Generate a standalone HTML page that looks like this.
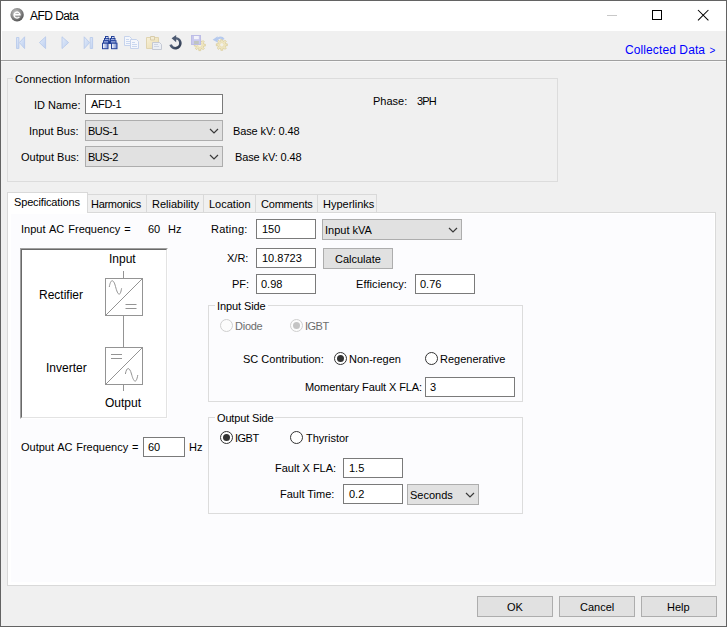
<!DOCTYPE html>
<html><head><meta charset="utf-8">
<style>
*{margin:0;padding:0;box-sizing:border-box}
html,body{width:727px;height:627px;overflow:hidden;background:#f0f0f0}
body{position:relative;font-family:"Liberation Sans",sans-serif;font-size:11px;color:#000}
.a{position:absolute}
.t{position:absolute;white-space:nowrap;font-size:11px;line-height:13px;letter-spacing:0}
.tb{position:absolute;background:#fff;border:1px solid #7a7a7a}
.cb{position:absolute;background:#e1e1e1;border:1px solid #adadad}
.btn{position:absolute;background:#e1e1e1;border:1px solid #adadad}
.gb{position:absolute;border:1px solid #dcdcdc}
.chev{position:absolute;width:12px;height:7px}
.rad{position:absolute;width:13px;height:13px;border-radius:50%;border:1px solid #333;background:#fff}
</style></head><body>
<!-- window frame -->
<div class="a" style="left:0;top:0;width:727px;height:627px;border:1px solid #636363;"></div>
<!-- title bar -->
<div class="a" style="left:1px;top:1px;width:725px;height:30px;background:#fff"></div>
<svg class="a" style="left:10px;top:8px" width="14" height="14" viewBox="0 0 14 14">
 <defs><radialGradient id="ig" cx="40%" cy="35%" r="65%"><stop offset="0" stop-color="#c8c8c8"/><stop offset="0.6" stop-color="#8a8a8a"/><stop offset="1" stop-color="#555"/></radialGradient></defs>
 <circle cx="7.1" cy="6.8" r="6.7" fill="url(#ig)"/>
 <path d="M4.2 6.7 H10 A3 3 0 1 0 9.4 8.9" fill="none" stroke="#fff" stroke-width="1.4"/>
</svg>
<div class="t" style="left:30px;top:9px;font-size:12px;line-height:14px;letter-spacing:-0.55px">AFD Data</div>
<div class="a" style="left:607px;top:15px;width:10px;height:1px;background:#c8c8c8"></div>
<div class="a" style="left:652px;top:10px;width:10px;height:10px;border:1px solid #000"></div>
<svg class="a" style="left:697px;top:9px" width="13" height="13" viewBox="0 0 13 13"><path d="M1 1 L11.4 11.4 M11.4 1 L1 11.4" stroke="#000" stroke-width="1.05"/></svg>
<!-- toolbar area -->
<div class="a" style="left:1px;top:31px;width:1px;height:29px;background:#fff"></div>
<div class="a" style="left:1px;top:60px;width:725px;height:1px;background:#a0a0a0"></div>
<div class="a" style="left:1px;top:61px;width:725px;height:1px;background:#f8f8f8"></div>
<!-- toolbar icons -->
<svg class="a" style="left:0;top:30px" width="240" height="26" viewBox="0 30 240 26">
 <defs>
  <linearGradient id="nav" x1="0" y1="0" x2="1" y2="1"><stop offset="0" stop-color="#e4ecf9"/><stop offset="1" stop-color="#bccff0"/></linearGradient>
  <linearGradient id="bino" x1="0" y1="0" x2="1" y2="0"><stop offset="0" stop-color="#ffffff"/><stop offset="1" stop-color="#6f86cc"/></linearGradient>
  <linearGradient id="clip" x1="0" y1="0" x2="1" y2="1"><stop offset="0" stop-color="#f8f1da"/><stop offset="1" stop-color="#eadbac"/></linearGradient>
  <linearGradient id="ref" x1="0" y1="0" x2="1" y2="1"><stop offset="0" stop-color="#6a7890"/><stop offset="1" stop-color="#2e3a50"/></linearGradient>
 </defs>
 <g fill="url(#nav)" stroke="#b9cbeb" stroke-width="0.9" stroke-linejoin="round">
  <rect x="16.5" y="37.5" width="2.4" height="11"/>
  <path d="M24.6 36.8 L19.4 42.6 L24.6 48.6 Z"/>
  <path d="M45.6 36.8 L39.4 42.6 L45.6 48.6 Z"/>
  <path d="M62 36.8 L68.6 42.6 L62 48.6 Z"/>
  <path d="M84.2 36.8 L89.6 42.6 L84.2 48.6 Z"/>
  <rect x="90.2" y="37.5" width="2.4" height="11"/>
 </g>
 <!-- binoculars -->
 <g stroke="#26439a" stroke-width="1" fill="#9fb0e2">
  <rect x="105.5" y="36.5" width="2.5" height="2"/>
  <rect x="111.5" y="36.5" width="2.5" height="2"/>
  <rect x="104.5" y="38.5" width="4.5" height="2.2"/>
  <rect x="110.5" y="38.5" width="4.5" height="2.2"/>
  <rect x="103.5" y="40.7" width="5.5" height="2.5"/>
  <rect x="110.5" y="40.7" width="5.5" height="2.5"/>
  <rect x="102.5" y="43.2" width="5.5" height="5.5" fill="url(#bino)"/>
  <rect x="111.5" y="43.2" width="5.5" height="5.5" fill="url(#bino)"/>
  <rect x="108.5" y="41.5" width="2" height="2" fill="#1d3a8e"/>
 </g>
 <g fill="#f4f6ff"><circle cx="106.8" cy="37.6" r="0.7"/><circle cx="112.8" cy="37.6" r="0.7"/></g>
 <!-- copy -->
 <g fill="#f5f7fc" stroke="#c6d3ec" stroke-width="1">
  <path d="M124.5 36.5 h5 l2 2 v7 h-7z"/>
  <path d="M130.5 39.5 h6 l2 2 v7 h-8z"/>
 </g>
 <g stroke="#c9d7f0" stroke-width="1"><path d="M126 39.5h3M126 41.5h4M126 43.5h4M132 42.5h3M132 44.5h5M132 46.5h5"/></g>
 <!-- paste -->
 <path d="M146.5 37.5 h12 v11 h-12z" fill="url(#clip)" stroke="#e0d4b0"/>
 <path d="M150.5 36.5 h4 v3.5 h-4z" fill="#f3ecd5" stroke="#d8ccaa"/>
 <path d="M152.5 42.5 h7 l2 2 v5 h-9z" fill="#eceff5" stroke="#c5c9d3"/>
 <g stroke="#cfd5e2"><path d="M154 44.5h4M154 46.5h5"/></g>
 <!-- refresh -->
 <path d="M176 38.2 A5 5 0 1 1 170.6 44.6" fill="none" stroke="url(#ref)" stroke-width="2.6"/>
 <path d="M171.6 38.3 L176.2 35 L176.2 42.2 Z" fill="#4d5a72"/>
 <!-- save gear -->
 <path d="M203.69 44.15 L205.31 44.12 L205.31 46.08 L203.69 46.05 L203.22 47.18 L204.39 48.30 L203.00 49.69 L201.88 48.52 L200.75 48.99 L200.78 50.61 L198.82 50.61 L198.85 48.99 L197.72 48.52 L196.60 49.69 L195.21 48.30 L196.38 47.18 L195.91 46.05 L194.29 46.08 L194.29 44.12 L195.91 44.15 L196.38 43.02 L195.21 41.90 L196.60 40.51 L197.72 41.68 L198.85 41.21 L198.82 39.59 L200.78 39.59 L200.75 41.21 L201.88 41.68 L203.00 40.51 L204.39 41.90 L203.22 43.02Z" fill="#efe6c2" stroke="#d8ca94" stroke-width="0.7"/>
 <circle cx="199.8" cy="45.1" r="2.2" fill="#f6f1de" stroke="#e2d6a8" stroke-width="0.6"/>
 <rect x="191.5" y="35.5" width="9" height="9" fill="#c9c9ee" stroke="#bdbde6"/>
 <rect x="194" y="36" width="4.8" height="3.2" fill="#f3f3fa"/>
 <rect x="194" y="41" width="4.8" height="3" fill="#bfc4c0"/>
 <!-- undo gear -->
 <path d="M225.69 43.85 L227.31 43.82 L227.31 45.78 L225.69 45.75 L225.22 46.88 L226.39 48.00 L225.00 49.39 L223.88 48.22 L222.75 48.69 L222.78 50.31 L220.82 50.31 L220.85 48.69 L219.72 48.22 L218.60 49.39 L217.21 48.00 L218.38 46.88 L217.91 45.75 L216.29 45.78 L216.29 43.82 L217.91 43.85 L218.38 42.72 L217.21 41.60 L218.60 40.21 L219.72 41.38 L220.85 40.91 L220.82 39.29 L222.78 39.29 L222.75 40.91 L223.88 41.38 L225.00 40.21 L226.39 41.60 L225.22 42.72Z" fill="#efe6c2" stroke="#d8ca94" stroke-width="0.7"/>
 <circle cx="221.8" cy="44.8" r="2.2" fill="#f6f1de" stroke="#e2d6a8" stroke-width="0.6"/>
 <circle cx="221.8" cy="44.8" r="1" fill="#f0f0f0"/>
 <path d="M216.8 40 A3.8 3.8 0 0 1 223.6 39.5" fill="none" stroke="#b6caee" stroke-width="2.4"/>
 <path d="M212.6 39.8 L217.6 36.2 L217.6 42.6 Z" fill="#b6caee"/>
</svg>
<div class="t" style="left:625px;top:43px;font-size:12px;line-height:14px;color:#0000ff;letter-spacing:0.1px">Collected Data <span style="font-size:10px;letter-spacing:0;margin-left:1px">&gt;</span></div>

<!-- Connection Information group -->
<div class="gb" style="left:7px;top:78px;width:551px;height:104px"></div>
<div class="t" style="left:13px;top:73px;background:#f0f0f0;padding:0 3px 0 2px;letter-spacing:0.05px">Connection Information</div>
<div class="t" style="left:34px;top:99px">ID Name:</div>
<div class="tb" style="left:85px;top:94px;width:138px;height:20px"></div>
<div class="t" style="left:91px;top:98px;letter-spacing:-0.3px">AFD-1</div>
<div class="t" style="left:29px;top:125px">Input Bus:</div>
<div class="cb" style="left:85px;top:120px;width:138px;height:21px"></div>
<div class="t" style="left:88px;top:125px;letter-spacing:-0.5px">BUS-1</div>
<svg class="chev" style="left:208px;top:127px" viewBox="0 0 12 7"><path d="M2 2 L6 6 L10 2" fill="none" stroke="#3a3a3a" stroke-width="1.2"/></svg>
<div class="t" style="left:233px;top:125px;letter-spacing:-0.12px">Base kV: 0.48</div>
<div class="t" style="left:21px;top:151px">Output Bus:</div>
<div class="cb" style="left:85px;top:146px;width:138px;height:21px"></div>
<div class="t" style="left:88px;top:151px;letter-spacing:-0.5px">BUS-2</div>
<svg class="chev" style="left:208px;top:153px" viewBox="0 0 12 7"><path d="M2 2 L6 6 L10 2" fill="none" stroke="#3a3a3a" stroke-width="1.2"/></svg>
<div class="t" style="left:235px;top:151px;letter-spacing:-0.12px">Base kV: 0.48</div>
<div class="t" style="left:373px;top:95px">Phase:</div>
<div class="t" style="left:417px;top:95px;letter-spacing:-0.85px">3PH</div>

<!-- tabs -->
<div class="a" style="left:7px;top:212px;width:709px;height:374px;background:#fff;border:1px solid #d9d9d9"></div>
<div class="a" style="left:11px;top:214px;width:703px;height:368px;background:#fcfcfe"></div>
<div class="a" style="left:87px;top:194px;width:290px;height:18px;background:#f0f0f0;border:1px solid #d9d9d9;border-bottom:none"></div>
<div class="a" style="left:146px;top:195px;width:1px;height:17px;background:#d9d9d9"></div>
<div class="a" style="left:203px;top:195px;width:1px;height:17px;background:#d9d9d9"></div>
<div class="a" style="left:255px;top:195px;width:1px;height:17px;background:#d9d9d9"></div>
<div class="a" style="left:317px;top:195px;width:1px;height:17px;background:#d9d9d9"></div>
<div class="a" style="left:7px;top:192px;width:81px;height:21px;background:#fff;border:1px solid #d9d9d9;border-bottom:none"></div>
<div class="t" style="left:14px;top:196px;letter-spacing:-0.15px">Specifications</div>
<div class="t" style="left:91px;top:198px;letter-spacing:-0.3px">Harmonics</div>
<div class="t" style="left:152px;top:198px">Reliability</div>
<div class="t" style="left:209px;top:198px">Location</div>
<div class="t" style="left:261px;top:198px;letter-spacing:-0.2px">Comments</div>
<div class="t" style="left:323px;top:198px">Hyperlinks</div>

<!-- spec page -->
<div class="t" style="left:21px;top:223px;word-spacing:1px">Input AC Frequency =</div>
<div class="t" style="left:148px;top:223px">60</div>
<div class="t" style="left:168px;top:223px">Hz</div>

<!-- diagram -->
<div class="a" style="left:20px;top:248px;width:148px;height:171px;background:#fff;border-style:solid;border-width:1px;border-color:#a0a0a0 #fff #fff #a0a0a0"></div>
<div class="a" style="left:21px;top:249px;width:146px;height:169px;border-style:solid;border-width:1px;border-color:#696969 #e3e3e3 #e3e3e3 #696969"></div>
<div class="t" style="left:109px;top:252px;font-size:12px;line-height:14px;letter-spacing:0">Input</div>
<div class="t" style="left:39px;top:288px;font-size:12px;line-height:14px;letter-spacing:0">Rectifier</div>
<div class="t" style="left:46px;top:361px;font-size:12px;line-height:14px;letter-spacing:0">Inverter</div>
<div class="t" style="left:105px;top:396px;font-size:12px;line-height:14px;letter-spacing:0">Output</div>
<svg class="a" style="left:100px;top:265px" width="50" height="130" viewBox="0 0 50 130">
 <g fill="none" stroke="#949494" stroke-width="1">
  <path d="M23.5 6 V13.5"/>
  <rect x="5.5" y="13.5" width="37" height="37"/>
  <path d="M5.5 50.5 L42.5 13.5"/>
  <path d="M23.5 50.5 V82.5"/>
  <rect x="5.5" y="82.5" width="37" height="37"/>
  <path d="M5.5 119.5 L42.5 82.5"/>
  <path d="M23.5 119.5 V126"/>
  <path d="M25.5 39.5 h11 M25.5 43.5 h11"/>
  <path d="M11 89.5 h11 M11 93.5 h11"/>
  <path d="M9.3 22 C10.5 14, 13.5 13.5, 15.5 21.5 S 20 33, 21.6 23.3" />
  <path d="M25.4 109 C26.5 102, 29.5 101.5, 31.5 109 S 36 120, 37.8 110" />
 </g>
</svg>

<div class="t" style="left:21px;top:441px;word-spacing:0.7px">Output AC Frequency =</div>
<div class="tb" style="left:143px;top:437px;width:42px;height:20px"></div>
<div class="t" style="left:148px;top:441px">60</div>
<div class="t" style="left:189px;top:441px">Hz</div>

<!-- right column -->
<div class="t" style="left:211px;top:223px;letter-spacing:0.25px">Rating:</div>
<div class="tb" style="left:256px;top:219px;width:60px;height:20px"></div>
<div class="t" style="left:262px;top:223px">150</div>
<div class="cb" style="left:322px;top:219px;width:140px;height:21px"></div>
<div class="t" style="left:325px;top:224px">Input kVA</div>
<svg class="chev" style="left:447px;top:226px" viewBox="0 0 12 7"><path d="M2 2 L6 6 L10 2" fill="none" stroke="#3a3a3a" stroke-width="1.2"/></svg>

<div class="t" style="left:227px;top:252px">X/R:</div>
<div class="tb" style="left:256px;top:248px;width:60px;height:20px"></div>
<div class="t" style="left:262px;top:252px">10.8723</div>
<div class="btn" style="left:323px;top:248px;width:70px;height:21px"></div>
<div class="t" style="left:335px;top:253px">Calculate</div>

<div class="t" style="left:232px;top:278px">PF:</div>
<div class="tb" style="left:256px;top:274px;width:60px;height:20px"></div>
<div class="t" style="left:261px;top:278px">0.98</div>
<div class="t" style="left:356px;top:278px;letter-spacing:0.1px">Efficiency:</div>
<div class="tb" style="left:415px;top:274px;width:60px;height:20px"></div>
<div class="t" style="left:420px;top:278px">0.76</div>

<!-- Input Side -->
<div class="gb" style="left:208px;top:305px;width:315px;height:97px"></div>
<div class="t" style="left:215px;top:300px;background:#fcfcfe;padding:0 2px;letter-spacing:-0.1px">Input Side</div>
<div class="rad" style="left:220px;top:319px;border-color:#cfcfcf;background:#fcfcfc"></div>
<div class="t" style="left:235px;top:320px;color:#6d6d6d;letter-spacing:-0.25px">Diode</div>
<div class="rad" style="left:290px;top:319px;border-color:#cfcfcf;background:#fcfcfc"></div>
<div class="a" style="left:293px;top:322px;width:7px;height:7px;border-radius:50%;background:#c4c4c4"></div>
<div class="t" style="left:305px;top:320px;color:#6d6d6d;letter-spacing:-0.5px">IGBT</div>

<div class="t" style="left:243px;top:353px">SC Contribution:</div>
<div class="rad" style="left:334px;top:352px"></div>
<div class="a" style="left:337px;top:355px;width:7px;height:7px;border-radius:50%;background:#333"></div>
<div class="t" style="left:349px;top:353px">Non-regen</div>
<div class="rad" style="left:425px;top:352px"></div>
<div class="t" style="left:440px;top:353px">Regenerative</div>
<div class="t" style="left:305px;top:381px;letter-spacing:-0.1px">Momentary Fault X FLA:</div>
<div class="tb" style="left:425px;top:377px;width:90px;height:20px"></div>
<div class="t" style="left:430px;top:381px">3</div>

<!-- Output Side -->
<div class="gb" style="left:208px;top:417px;width:315px;height:97px"></div>
<div class="t" style="left:215px;top:412px;background:#fcfcfe;padding:0 2px;letter-spacing:-0.15px">Output Side</div>
<div class="rad" style="left:220px;top:431px"></div>
<div class="a" style="left:223px;top:434px;width:7px;height:7px;border-radius:50%;background:#333"></div>
<div class="t" style="left:235px;top:432px;letter-spacing:-0.5px">IGBT</div>
<div class="rad" style="left:290px;top:431px"></div>
<div class="t" style="left:306px;top:432px">Thyristor</div>
<div class="t" style="left:275px;top:462px">Fault X FLA:</div>
<div class="tb" style="left:343px;top:458px;width:60px;height:20px"></div>
<div class="t" style="left:349px;top:462px">1.5</div>
<div class="t" style="left:280px;top:488px">Fault Time:</div>
<div class="tb" style="left:343px;top:484px;width:60px;height:20px"></div>
<div class="t" style="left:349px;top:488px">0.2</div>
<div class="cb" style="left:407px;top:484px;width:72px;height:21px"></div>
<div class="t" style="left:410px;top:489px">Seconds</div>
<svg class="chev" style="left:464px;top:491px" viewBox="0 0 12 7"><path d="M2 2 L6 6 L10 2" fill="none" stroke="#3a3a3a" stroke-width="1.2"/></svg>

<!-- buttons -->
<div class="btn" style="left:477px;top:596px;width:76px;height:21px"></div>
<div class="t" style="left:507px;top:601px">OK</div>
<div class="btn" style="left:559px;top:596px;width:76px;height:21px"></div>
<div class="t" style="left:580px;top:601px">Cancel</div>
<div class="btn" style="left:641px;top:596px;width:76px;height:21px"></div>
<div class="t" style="left:667px;top:601px">Help</div>
</body></html>
